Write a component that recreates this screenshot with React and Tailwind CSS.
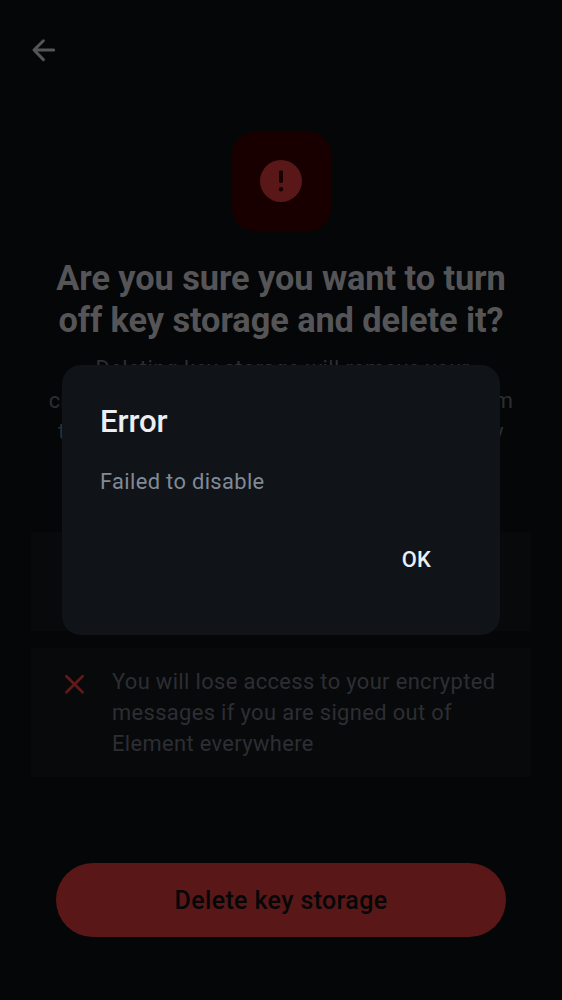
function BackArrow() {
  return (
    <svg className="block h-[38px] w-[38px]" viewBox="0 0 38 38" fill="none" stroke="#555557" strokeWidth="3" strokeLinecap="round" strokeLinejoin="round">
      <path d="M28.7 19H9.2M18.4 9.8L9 19L18.4 28.6" />
    </svg>
  );
}

function ErrorBadge() {
  return (
    <div className="mx-auto flex h-[99px] w-[99px] items-center justify-center rounded-[22px] bg-[#190000] pb-[1px]">
      <svg className="block h-[42px] w-[42px]" viewBox="0 0 42 42">
        <circle cx="21" cy="21" r="21" fill="#591817" />
        <rect x="19" y="10.4" width="4" height="12.6" rx="1.4" fill="#190000" />
        <circle cx="21" cy="29.3" r="2.2" fill="#190000" />
      </svg>
    </div>
  );
}

function Consequence({ children }) {
  return (
    <li className="flex bg-[#08090b] pt-[18px] pr-6 pb-[18px] pl-[32px]">
      <svg className="mt-[6px] block h-[24px] w-[24px] shrink-0" viewBox="0 0 24 24" fill="none" stroke="#641918" strokeWidth="2.7" strokeLinecap="round">
        <path d="M3.4 4.2L19.6 20.2M19.6 4.2L3.4 20.2" />
      </svg>
      <p className="ml-[25px] text-[21.86px] leading-[31.22px] tracking-[0.37px] text-[#2d2e33]">{children}</p>
    </li>
  );
}

export default function App() {
  return (
    <div className="relative flex h-[1000px] w-[562px] flex-col overflow-hidden bg-[#050608] font-['Roboto',sans-serif]">
      <header className="flex h-[100px] shrink-0 items-center pl-[25px]">
        <button aria-label="Back">
          <BackArrow />
        </button>
      </header>

      <main className="flex flex-1 flex-col px-[31px] pt-8">
        <ErrorBadge />
        <h1 className="mt-[26px] text-center text-[34.35px] leading-[42.15px] font-bold tracking-[-0.07px] text-[#555557]">
          Are you sure you want to turn
          <br />
          off key storage and delete it?
        </h1>
        <p className="mt-[12px] text-center text-[21.86px] leading-[31.22px] tracking-[0.39px] text-[#2d2e33]">
          <span className="block pl-[3px]">Deleting key storage will remove your</span>
          cryptographic identity and message keys from
          <br />
          the server and turn off the following security
          <br />
          features:
        </p>
        <ul className="mt-[54px] flex flex-col gap-[17px]">
          <Consequence>
            You will not have encrypted
            <br />
            message history on new devices
          </Consequence>
          <Consequence>
            You will lose access to your encrypted
            <br />
            messages if you are signed out of
            <br />
            Element everywhere
          </Consequence>
        </ul>
      </main>

      <footer className="px-14 pb-[63px]">
        <button className="flex h-[74px] w-full items-center justify-center rounded-full bg-[#591817] pt-px text-[25px] font-medium tracking-[0.37px] text-[#060708]">
          Delete key storage
        </button>
      </footer>

      <div role="dialog" aria-label="Error" className="absolute top-[365px] left-[62px] flex h-[270px] w-[438px] flex-col rounded-[19px] bg-[#101318] px-[38px] pt-[37px]">
        <h2 className="text-[31.2px] leading-10 font-medium tracking-[-0.1px] text-[#ebeef2]">Error</h2>
        <p className="mt-6 text-[21.86px] leading-[31.22px] tracking-[0.36px] text-[#818a95]">Failed to disable</p>
        <div className="mt-[47px] flex justify-end pr-[31px]">
          <button className="text-[21.86px] leading-[31.22px] font-medium tracking-[0.16px] text-[#ebeef2]">OK</button>
        </div>
      </div>
    </div>
  );
}
